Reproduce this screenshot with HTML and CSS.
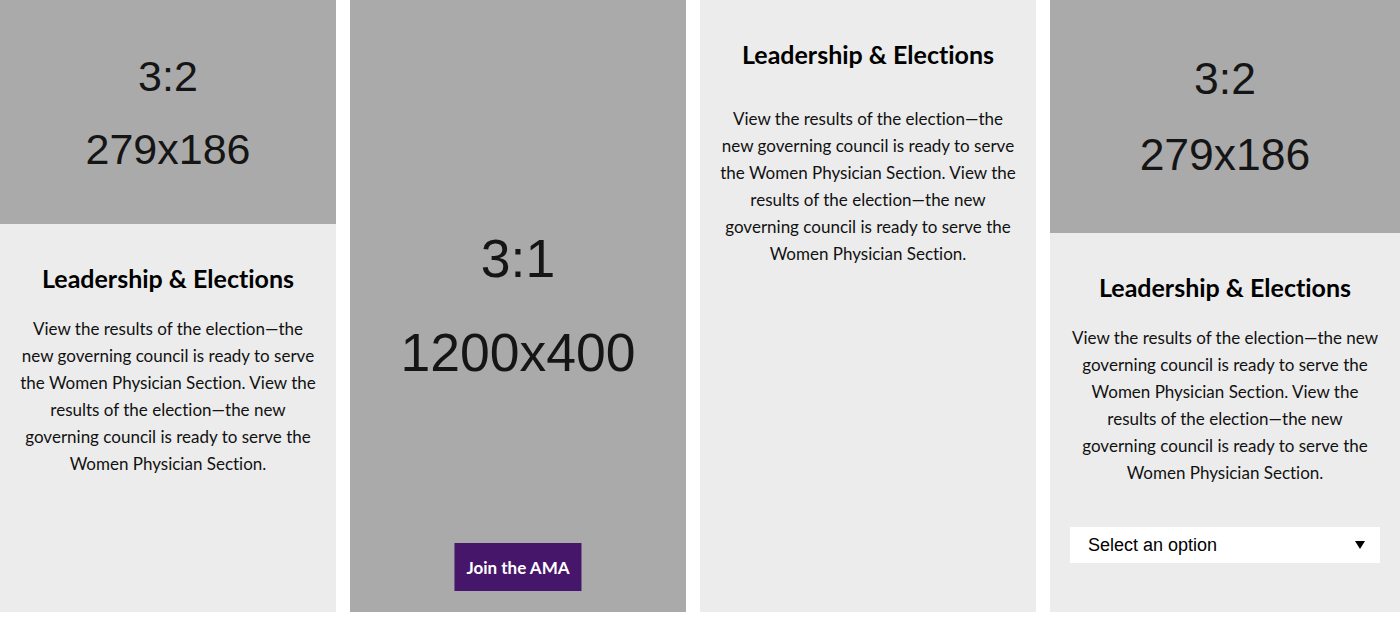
FILE: index.html
```html
<!DOCTYPE html>
<html lang="en">
<head>
<meta charset="utf-8">
<title>Cards</title>
<link rel="stylesheet" href="styles.css">
</head>
<body>
<main class="cards">
  <article class="card">
    <div class="ph ph--std"><span>3:2</span><span>279x186</span></div>
    <div class="card-body">
      <h2 class="card-title">Leadership &amp; Elections</h2>
      <p class="card-text">View the results of the election—the new governing council is ready to serve the Women Physician Section. View the results of the election—the new governing council is ready to serve the Women Physician Section.</p>
    </div>
  </article>

  <article class="card card--hero">
    <div class="ph ph--hero"><span>3:1</span><span>1200x400</span></div>
    <a class="btn" href="#">Join the AMA</a>
  </article>

  <article class="card">
    <div class="card-body card-body--text">
      <h2 class="card-title">Leadership &amp; Elections</h2>
      <p class="card-text">View the results of the election—the new governing council is ready to serve the Women Physician Section. View the results of the election—the new governing council is ready to serve the Women Physician Section.</p>
    </div>
  </article>

  <article class="card card--wide">
    <div class="ph ph--wide"><span>3:2</span><span>279x186</span></div>
    <div class="card-body">
      <h2 class="card-title">Leadership &amp; Elections</h2>
      <p class="card-text">View the results of the election—the new governing council is ready to serve the Women Physician Section. View the results of the election—the new governing council is ready to serve the Women Physician Section.</p>
      <div class="select">
        <span class="select-label">Select an option</span>
        <svg class="select-arrow" width="10" height="8" viewBox="0 0 10 8"><polygon points="0,0 10,0 5,8" fill="#000"/></svg>
      </div>
    </div>
  </article>
</main>
</body>
</html>
```

FILE: styles.css
```css
* { box-sizing: border-box; }

html, body {
  margin: 0;
  padding: 0;
  background: #ffffff;
}

body {
  font-family: "Lato", "Open Sans", sans-serif;
  font-variant-ligatures: none;
  color: #000;
}

.cards {
  display: grid;
  grid-template-columns: 336px 336px 336px 350px;
  column-gap: 14px;
  height: 612px;
}

.card {
  background: #ececec;
  display: flex;
  flex-direction: column;
  min-width: 0;
}

.ph {
  background: #aaaaaa;
  color: #151515;
  font-family: "Liberation Sans", Arial, sans-serif;
  display: flex;
  flex-direction: column;
  align-items: center;
  justify-content: center;
}

.ph--std {
  height: 224px;
  font-size: 43px;
  line-height: 73px;
  padding-top: 2px;
}

.ph--wide {
  height: 233px;
  font-size: 44.5px;
  line-height: 76px;
  padding-top: 0;
}

.ph--hero {
  flex: 1;
  font-size: 53.5px;
  line-height: 94px;
}

.card--hero {
  position: relative;
  background: #aaaaaa;
}

.btn {
  position: absolute;
  left: 50%;
  bottom: 21px;
  transform: translateX(-50%);
  height: 48px;
  padding: 0 12px;
  display: inline-flex;
  align-items: center;
  justify-content: center;
  background: #46166b;
  color: #ffffff;
  font-weight: 700;
  font-size: 17px;
  text-decoration: none;
  white-space: nowrap;
}

.card-body {
  padding: 39px 20px 0;
  text-align: center;
}

.card-title {
  margin: 0 0 22px;
  font-size: 25px;
  line-height: 1.2;
  font-weight: 700;
}

.card-body--text .card-title {
  margin-bottom: 36px;
}

.card-text {
  margin: 0;
  font-size: 17px;
  line-height: 27px;
  color: #111;
}

.select {
  margin-top: 41px;
  height: 36px;
  background: #ffffff;
  display: flex;
  align-items: center;
  justify-content: space-between;
  padding: 0 15px 0 18px;
  font-family: "Liberation Sans", Arial, sans-serif;
  font-size: 18px;
  color: #000;
  text-align: left;
}

.select-arrow {
  display: block;
}
```
